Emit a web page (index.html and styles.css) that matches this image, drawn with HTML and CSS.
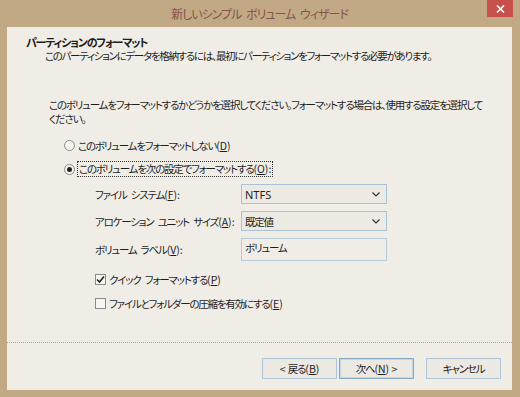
FILE: index.html
```html
<!DOCTYPE html>
<html lang="ja">
<head>
  <meta charset="UTF-8" />
  <title>新しいシンプル ボリューム ウィザード</title>
  <link rel="stylesheet" href="styles.css">
</head>
<body>
  <div class="window">
    <div class="titlebar">
      <span></span>
      <span class="title">新しいシンプル ボリューム ウィザード</span>
      <span class="close">
        <svg width="9" height="8" viewBox="0 0 9 8"><path d="M1 0.5 L8 7.5 M8 0.5 L1 7.5" stroke="#fff" stroke-width="1.6"/></svg>
      </span>
    </div>

    <div class="client">
      <div class="header">
        <div class="header-title">パーティションのフォーマット</div>
        <div class="header-sub">このパーティションにデータを格納するには、最初にパーティションをフォーマットする必要があります。</div>
      </div>

      <div class="content">
        <p class="desc">このボリュームをフォーマットするかどうかを選択してください。フォーマットする場合は、使用する設定を選択して<br>ください。</p>

        <div class="options">
          <div class="option">
            <span class="radio"></span>
            <span>このボリュームをフォーマットしない<span class="key">(<u>D</u>)</span></span>
          </div>
          <div class="option">
            <span class="radio checked"></span>
            <span class="focus">このボリュームを次の設定でフォーマットする<span class="key">(<u>O</u>):</span></span>
          </div>
        </div>

        <div class="settings">
          <span class="label">ファイル システム<span class="key">(<u>F</u>):</span></span>
          <div class="combo">
            <span class="latin">NTFS</span>
            <svg width="8" height="5" viewBox="0 0 8 5"><path d="M0.5 0.5 L4 4 L7.5 0.5" fill="none" stroke="#333" stroke-width="1.2"/></svg>
          </div>
          <span class="label">アロケーション ユニット サイズ<span class="key">(<u>A</u>):</span></span>
          <div class="combo">
            <span>既定値</span>
            <svg width="8" height="5" viewBox="0 0 8 5"><path d="M0.5 0.5 L4 4 L7.5 0.5" fill="none" stroke="#333" stroke-width="1.2"/></svg>
          </div>
          <span class="label">ボリューム ラベル<span class="key">(<u>V</u>):</span></span>
          <div class="textbox">ボリューム</div>
        </div>

        <div class="checks">
          <div class="option">
            <span class="check checked">
              <svg width="9" height="9" viewBox="0 0 9 9"><path d="M1 4.5 L3.5 7 L8 1.5" fill="none" stroke="#222" stroke-width="1.6"/></svg>
            </span>
            <span>クイック フォーマットする<span class="key">(<u>P</u>)</span></span>
          </div>
          <div class="option">
            <span class="check"></span>
            <span>ファイルとフォルダーの圧縮を有効にする<span class="key">(<u>E</u>)</span></span>
          </div>
        </div>
      </div>

      <div class="footer">
        <button class="btn"><span class="key">&lt; </span>戻る<span class="key">(<u>B</u>)</span></button>
        <button class="btn default">次へ<span class="key">(<u>N</u>) &gt;</span></button>
        <button class="btn cancel">キャンセル</button>
      </div>
    </div>
  </div>
</body>
</html>
```

FILE: styles.css
```css
* {
  margin: 0;
  padding: 0;
  box-sizing: border-box;
}

body {
  background: #c1a986;
  font-family: 'Noto Sans CJK JP', 'Noto Sans', sans-serif;
  font-size: 10.5px;
  letter-spacing: -1.2px;
  word-spacing: 3px;
  font-feature-settings: "palt";
  color: #1e1e1e;
  overflow: hidden;
}

.key {
  letter-spacing: 0;
  word-spacing: 0;
}

.window {
  width: 520px;
  height: 397px;
  padding: 0 8px 7px 7px;
  display: flex;
  flex-direction: column;
}

.titlebar {
  height: 27px;
  display: grid;
  grid-template-columns: 1fr auto 1fr;
  align-items: start;
}

.title {
  padding-top: 6px;
  font-size: 12px;
  line-height: 16px;
  color: #86534b;
  letter-spacing: -1px;
}

.close {
  justify-self: end;
  margin-right: -1px;
  width: 26px;
  height: 17px;
  background: #c8504b;
  display: flex;
  align-items: center;
  justify-content: center;
}

.client {
  flex: 1;
  background: #f0ede6;
  display: flex;
  flex-direction: column;
}

.header {
  padding: 9px 0 0 19px;
  line-height: 13px;
}

.header-title {
  font-size: 11px;
  font-weight: 700;
  letter-spacing: -1.2px;
}

.header-sub {
  padding-left: 19px;
  letter-spacing: -1.3px;
}

.content {
  flex: 1;
  padding-left: 42px;
}

.desc {
  margin-top: 36px;
  line-height: 14px;
  white-space: nowrap;
}

.options {
  margin: 11px 0 0 15px;
  display: flex;
  flex-direction: column;
  gap: 8px;
}

.option {
  height: 16px;
  display: flex;
  align-items: center;
  gap: 3px;
}

.radio {
  width: 11px;
  height: 11px;
  border: 1px solid #8a8a8a;
  border-radius: 50%;
  background: #f7f5f1;
  display: flex;
  align-items: center;
  justify-content: center;
}

.radio.checked::after {
  content: "";
  width: 5px;
  height: 5px;
  border-radius: 50%;
  background: #222;
}

.focus {
  outline: 1px dotted #333;
  padding: 0 1px;
  line-height: 14px;
}

.settings {
  margin: 7px 0 0 46px;
  display: grid;
  grid-template-columns: 146px 146px;
  grid-template-rows: 20px 20px 23px;
  row-gap: 7px;
  align-items: center;
  white-space: nowrap;
}

.combo {
  height: 20px;
  border: 1px solid #a9c2d5;
  background: #edeae4;
  display: flex;
  align-items: center;
  justify-content: space-between;
  padding: 0 6px 0 3px;
}

.latin {
  font-family: 'Noto Sans', sans-serif;
  font-size: 11px;
  letter-spacing: 0;
}

.textbox {
  height: 23px;
  border: 1px solid #b8cbd9;
  padding: 1px 3px;
  line-height: 16px;
}

.checks {
  margin: 10px 0 0 46px;
  display: flex;
  flex-direction: column;
  gap: 8px;
}

.check {
  width: 11px;
  height: 11px;
  border: 1px solid #8a8a8a;
  background: #f7f5f1;
  display: flex;
  align-items: center;
  justify-content: center;
}

.footer {
  border-top: 1px dotted #9aa3ab;
  padding: 15px 11px 11px 0;
  display: flex;
  justify-content: flex-end;
  gap: 2px;
}

.btn {
  width: 75px;
  height: 21px;
  font: inherit;
  letter-spacing: inherit;
  color: #1e1e1e;
  background: #ece9e2;
  border: 1px solid #aec6d8;
}

.btn.default {
  border-color: #86abc8;
  box-shadow: inset 0 0 0 1px #c5d6e3;
}

.btn.cancel {
  margin-left: 10px;
}
```
